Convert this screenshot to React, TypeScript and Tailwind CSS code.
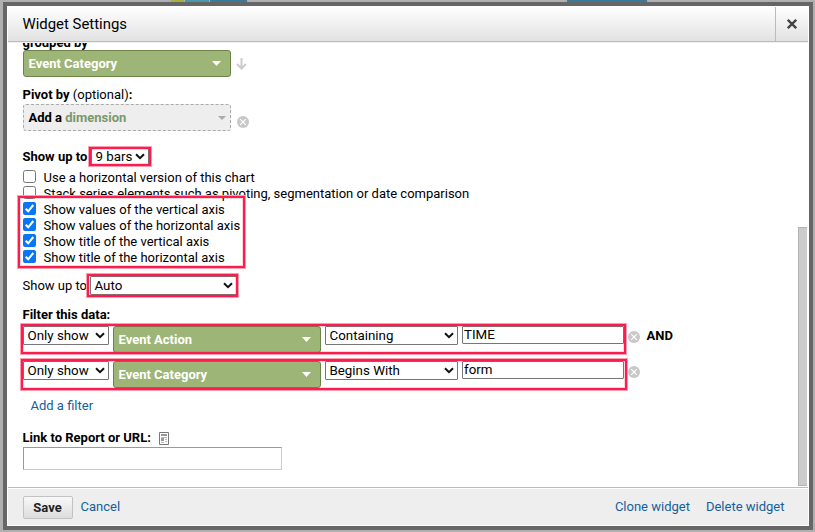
import React from "react";

function Select({ value, className }: { value: string; className: string }) {
  return (
    <div className={`flex h-[19px] shrink-0 items-center justify-between rounded-[1px] border border-[#767676] bg-white pr-[3px] pl-[3.5px] text-[13.33px] leading-none ${className}`}>
      <span>{value}</span>
      <svg width="10" height="7" viewBox="0 0 10 7" fill="none" stroke="#111" strokeWidth="2">
        <path d="M1 1.2 5 5.2 9 1.2" />
      </svg>
    </div>
  );
}

function Dimension({ label }: { label: string }) {
  return (
    <div className="flex h-[27px] w-[208px] shrink-0 items-center justify-between rounded-[3px] border border-[#6d8448] bg-[#9db576] pr-[9px] pl-[4.5px] font-bold text-white">
      <span>{label}</span>
      <svg width="9" height="5" viewBox="0 0 9 5" fill="#fff"><path d="M0 0h9L4.5 5z" /></svg>
    </div>
  );
}

function Remove({ className }: { className: string }) {
  return (
    <svg className={`shrink-0 ${className}`} width="12" height="12" viewBox="0 0 12 12">
      <circle cx="6" cy="6" r="6" fill="#c8c8c8" />
      <path d="M3.2 3.2 8.8 8.8M8.8 3.2 3.2 8.8" stroke="#fff" strokeWidth="1.2" />
    </svg>
  );
}

function Check({ label, checked }: { label: string; checked?: boolean }) {
  return (
    <div className="flex h-4 items-start">
      {checked ? (
        <svg className="shrink-0" width="13" height="13" viewBox="0 0 13 13">
          <rect width="13" height="13" rx="2" fill="#0b76f5" />
          <path d="M2.7 6.8 5.2 9.3 10.3 3" fill="none" stroke="#fff" strokeWidth="2" />
        </svg>
      ) : (
        <span className="h-[13px] w-[13px] shrink-0 rounded-[2.5px] border border-[#767676] bg-white" />
      )}
      <span className="ml-[7.5px] leading-4">{label}</span>
    </div>
  );
}

function Mark({ className }: { className: string }) {
  return <div className={`absolute border-2 border-[#fb1d4d] shadow-[0_0_0_1px_#fd9db2,inset_0_0_0_1px_#fb1d4d30] ${className}`} />;
}

function FilterRow({ dimension, match, text, and }: { dimension: string; match: string; text: string; and?: boolean }) {
  return (
    <div className="flex h-[35px] items-start gap-1">
      <Select value="Only show" className="w-[86px]" />
      <Dimension label={dimension} />
      <Select value={match} className="w-[133px]" />
      <div className="flex h-[18px] w-[162px] shrink-0 items-center rounded-[1px] border border-[#767676] pl-px text-[13.33px] leading-none">{text}</div>
      <Remove className="mt-[5px]" />
      {and && <b className="ml-[2.5px] leading-5">AND</b>}
    </div>
  );
}

export default function App() {
  return (
    <div className="flex h-[532px] w-[815px] flex-col bg-[#b0b0b0] font-['Roboto',sans-serif] text-[13px] leading-4 text-black">
      <div className="flex h-[2px] shrink-0">
        <div className="ml-[171px] h-full w-[13px] bg-[#abae38]" />
        <div className="ml-px h-full w-6 bg-[#4599a9]" />
        <div className="ml-px h-full w-[37px] bg-[#3b7a9b]" />
        <div className="ml-[320px] h-full w-20 bg-[#3b7a9b]" />
      </div>
      <div className="mr-0.5 ml-[3px] flex h-[528px] flex-col border-4 border-[#666] bg-white p-px">
        <div className="flex h-[35px] shrink-0 border-b border-[#bbb] bg-linear-to-b from-white to-[#e2e2e2]">
          <div className="flex-1 pt-px pl-[14.5px] text-[14.9px] leading-[33px]">Widget Settings</div>
          <div className="flex w-[33px] items-center justify-center border-l border-[#bbb]">
            <svg width="10" height="10" viewBox="0 0 10 10" stroke="#444" strokeWidth="2.3"><path d="M.8.8 9.2 9.2M9.2.8.8 9.2" /></svg>
          </div>
        </div>
        <div className="h-px shrink-0 bg-[#f0f0f0]" />
        <div className="relative flex h-[444px] shrink-0 overflow-hidden">
          <div className="flex flex-1 flex-col pl-[15px]">
            <b className="-mt-2 -ml-[0.5px] h-[15px] shrink-0 leading-4">grouped by</b>
            <div className="flex items-center">
              <Dimension label="Event Category" />
              <svg className="ml-[5px]" width="11" height="12" viewBox="0 0 11 12" fill="none" stroke="#ccc" strokeWidth="2"><path d="M5.5 0v10M1 6l4.5 4.5L10 6" /></svg>
            </div>
            <div className="mt-[10px] -ml-[0.5px] h-4"><b>Pivot by</b> (optional)<b>:</b></div>
            <div className="mt-px flex h-[27px]">
              <div className="flex w-[208px] items-center justify-between rounded-[3px] border border-dashed border-[#aaa] bg-[#eee] pr-1 pl-[4.5px] font-bold">
                <span>Add a <span className="text-[#7b986c]">dimension</span></span>
                <svg width="8" height="4" viewBox="0 0 8 4" fill="#aaa"><path d="M0 0h8L4 4z" /></svg>
              </div>
              <Remove className="mt-3 ml-1.5" />
            </div>
            <div className="mt-4 flex h-[19px] items-center"><b className="-ml-[0.5px] w-[68.5px] whitespace-nowrap">Show up to</b><Select value="9 bars" className="w-[58px]" /></div>
            <div className="mt-1 flex h-24 flex-col">
              <Check label="Use a horizontal version of this chart" />
              <Check label="Stack series elements such as pivoting, segmentation or date comparison" />
              <Check label="Show values of the vertical axis" checked />
              <Check label="Show values of the horizontal axis" checked />
              <Check label="Show title of the vertical axis" checked />
              <Check label="Show title of the horizontal axis" checked />
            </div>
            <div className="mt-[10px] flex h-[19px] items-center"><span className="-ml-[0.5px] w-[67.5px] whitespace-nowrap">Show up to</span><Select value="Auto" className="w-[147px]" /></div>
            <b className="mt-3 mb-[3px] -ml-[0.5px] h-4">Filter this data:</b>
            <FilterRow dimension="Event Action" match="Containing" text="TIME" and />
            <FilterRow dimension="Event Category" match="Begins With" text="form" />
            <div className="mt-0.5 pl-[7.5px] text-[#15609c]">Add a filter</div>
            <div className="mt-4 -ml-[0.5px] flex h-4 items-center">
              <b>Link to Report or URL:</b>
              <svg className="ml-2" width="10" height="13" viewBox="0 0 10 13">
                <path d="M.5.5h9v12h-9z" fill="#fff" stroke="#777" />
                <path d="M2 2h6v2H2zM2 6h3v3H2z" fill="#999" />
                <path d="M2 5.5h6M6 7.5h2M6 9.5h2M2 10.5h3" stroke="#bbb" />
              </svg>
            </div>
            <div className="mt-px h-[23px] w-[259px] border border-t-[#999] border-r-[#ccc] border-b-[#ccc] border-l-[#999]" />
          </div>
          <div className="mt-[184px] mr-px h-[259px] w-[9px] border border-r-0 border-[#b2b2b2] bg-[#ccc]" />
          <Mark className="top-[104px] left-[81px] h-[19px] w-[62px]" />
          <Mark className="top-[153px] left-[10px] h-[72px] w-[227px]" />
          <Mark className="top-[231px] left-[79px] h-[23px] w-[151px]" />
          <Mark className="top-[281px] left-[13px] h-[30px] w-[605px]" />
          <Mark className="top-[316px] left-[13px] h-[31px] w-[606px]" />
        </div>
        <div className="flex flex-1 border-t border-[#bbb] pt-px">
          <div className="flex flex-1 items-center bg-[#eee] pr-[23.5px] pl-[15px] text-[#15609c]">
            <div className="flex h-[23px] w-[50px] items-center justify-center rounded-[2px] border border-[#c2c2c2] bg-linear-to-b from-[#f8f8f8] to-[#ddd] pt-px pr-px font-bold text-[#222]">Save</div>
            <span className="ml-[7.5px]">Cancel</span>
            <span className="ml-auto">Clone widget</span>
            <span className="ml-4">Delete widget</span>
          </div>
        </div>
      </div>
    </div>
  );
}
